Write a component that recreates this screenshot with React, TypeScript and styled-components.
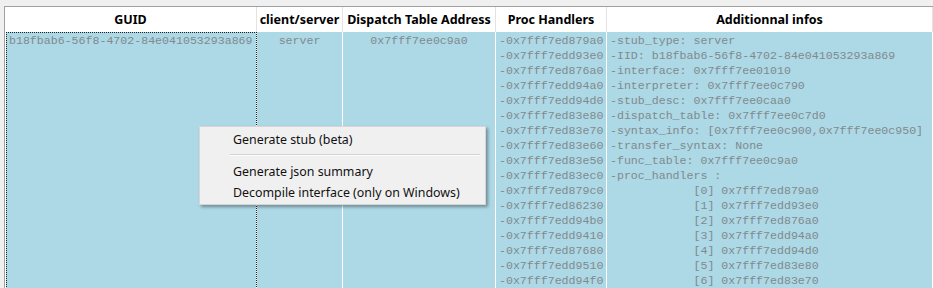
import React from "react";
import styled, { createGlobalStyle } from "styled-components";

const Global = createGlobalStyle`
  html, body { margin: 0; padding: 0; background: #f0f0f0; overflow: hidden; }
  body { width: 933px; height: 288px; }
`;

const COLS = "252px 86px 153px 111px 1fr";

const Frame = styled.div`
  padding: 6px 0 0 4px;
  height: 288px;
  box-sizing: border-box;
  position: relative;
`;

const TableView = styled.div`
  border-top: 1px solid #a0a0a0;
  border-left: 1px solid #a0a0a0;
  background: #fff;
  height: 100%;
  display: flex;
  flex-direction: column;
  overflow: hidden;
`;

const HeaderRow = styled.div`
  display: grid;
  grid-template-columns: ${COLS};
  height: 25px;
  flex: none;
`;

const HeaderCell = styled.div`
  display: flex;
  align-items: center;
  justify-content: center;
  border-right: 1px solid #e3e3e3;
  font-family: "Noto Sans", sans-serif;
  font-weight: 700;
  font-size: 12.5px;
  color: #000;
  white-space: nowrap;
  overflow: hidden;
`;

const BodyRow = styled.div`
  display: grid;
  grid-template-columns: ${COLS};
  flex: 1;
  min-height: 0;
`;

const Cell = styled.div<{ $align?: string; $focus?: boolean }>`
  background: #add8e6;
  border-right: 1px solid #fff;
  margin-left: ${(p) => (p.$focus ? "1px" : "0")};
  outline: ${(p) => (p.$focus ? "1px dotted #222" : "none")};
  outline-offset: -1px;
  padding: 1px ${(p) => (p.$align === "left" ? "3px" : "2px")};
  text-align: ${(p) => p.$align || "center"};
  font-family: "Liberation Mono", "Courier New", monospace;
  font-size: 11.6px;
  line-height: 15px;
  color: #808a8d;
  white-space: pre;
  overflow: hidden;
`;

const Menu = styled.div`
  position: absolute;
  left: 199px;
  top: 126px;
  width: 285px;
  padding: 2px 0 1px;
  background: #f0f0f0;
  border: 1px solid #d6d6d6;
  box-shadow: 2px 2px 3px rgba(0, 0, 0, 0.35);
  font-family: "Noto Sans", sans-serif;
  font-size: 12.4px;
  color: #111;
`;

const MenuItem = styled.div`
  height: 21px;
  line-height: 21px;
  padding-left: 33px;
  white-space: nowrap;
`;

const Separator = styled.div`
  height: 1px;
  margin: 4px 5px 5px 30px;
  background: #d4d4d4;
  border-bottom: 1px solid #fbfbfb;
`;

const procs = [
  "0x7fff7ed879a0",
  "0x7fff7edd93e0",
  "0x7fff7ed876a0",
  "0x7fff7edd94a0",
  "0x7fff7edd94d0",
  "0x7fff7ed83e80",
  "0x7fff7ed83e70",
  "0x7fff7ed83e60",
  "0x7fff7ed83e50",
  "0x7fff7ed83ec0",
  "0x7fff7ed879c0",
  "0x7fff7ed86230",
  "0x7fff7edd94b0",
  "0x7fff7edd9410",
  "0x7fff7ed87680",
  "0x7fff7edd9510",
  "0x7fff7edd94f0",
];

const infos = [
  "-stub_type: server",
  "-IID: b18fbab6-56f8-4702-84e041053293a869",
  "-interface: 0x7fff7ee01010",
  "-interpreter: 0x7fff7ee0c790",
  "-stub_desc: 0x7fff7ee0caa0",
  "-dispatch_table: 0x7fff7ee0c7d0",
  "-syntax_info: [0x7fff7ee0c900,0x7fff7ee0c950]",
  "-transfer_syntax: None",
  "-func_table: 0x7fff7ee0c9a0",
  "-proc_handlers :",
  ...procs.slice(0, 7).map((p, i) => `            [${i}] ${p}`),
];

export default function App() {
  return (
    <Frame>
      <Global />
      <TableView>
        <HeaderRow>
          <HeaderCell>GUID</HeaderCell>
          <HeaderCell>client/server</HeaderCell>
          <HeaderCell>Dispatch Table Address</HeaderCell>
          <HeaderCell>Proc Handlers</HeaderCell>
          <HeaderCell>Additionnal infos</HeaderCell>
        </HeaderRow>
        <BodyRow>
          <Cell $align="left" $focus>b18fbab6-56f8-4702-84e041053293a869</Cell>
          <Cell>server</Cell>
          <Cell>0x7fff7ee0c9a0</Cell>
          <Cell $align="left">{procs.map((p) => "-" + p).join("\n")}</Cell>
          <Cell $align="left">{infos.join("\n")}</Cell>
        </BodyRow>
      </TableView>
      <Menu>
        <MenuItem>Generate stub (beta)</MenuItem>
        <Separator />
        <MenuItem>Generate json summary</MenuItem>
        <MenuItem>Decompile interface (only on Windows)</MenuItem>
      </Menu>
    </Frame>
  );
}
